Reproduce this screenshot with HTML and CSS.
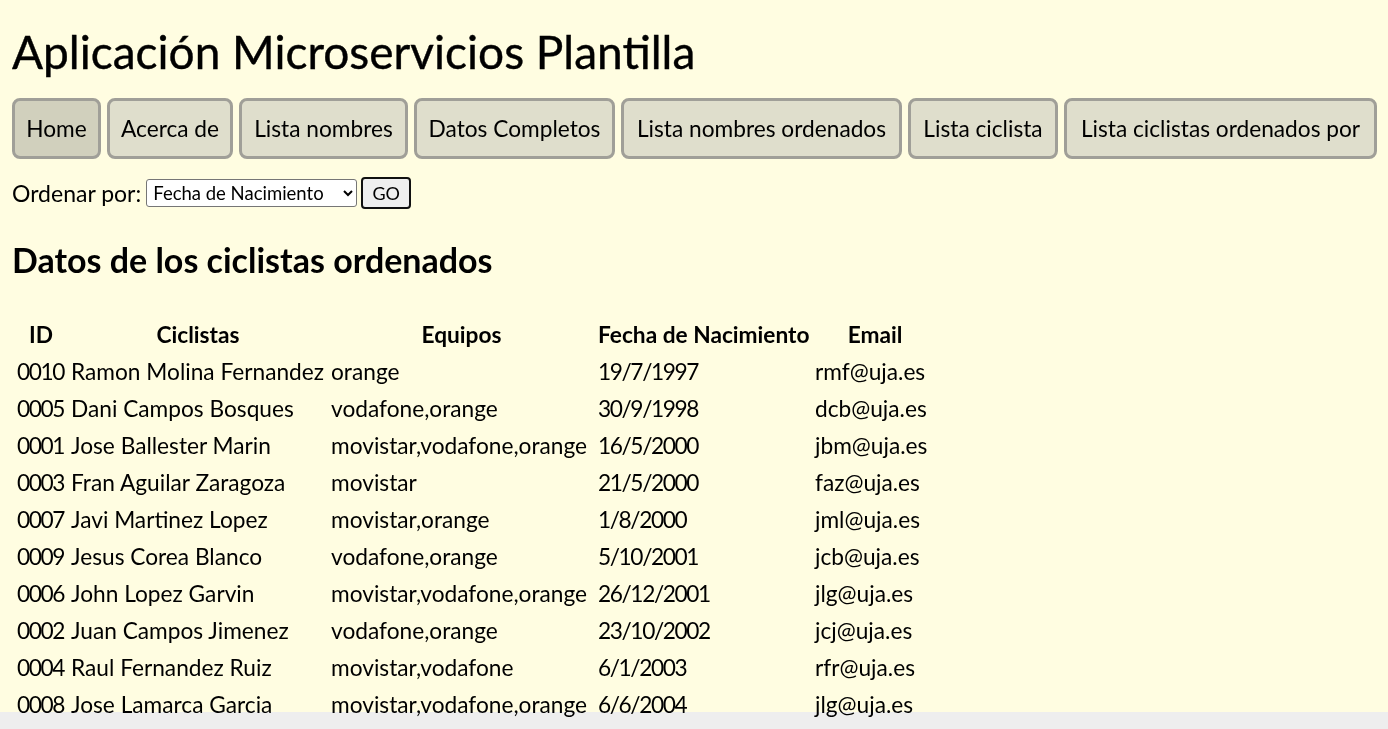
FILE: index.html
```html
<!DOCTYPE html>
<html lang="es">
<head>
<meta charset="utf-8">
<title>Aplicación Microservicios Plantilla</title>
<link rel="stylesheet" href="styles.css">
</head>
<body>
<h1 class="title">Aplicación Microservicios Plantilla</h1>
<nav class="nav">
  <a class="nav-btn nb-home active" href="#">Home</a>
  <a class="nav-btn nb-about" href="#">Acerca de</a>
  <a class="nav-btn nb-names" href="#">Lista nombres</a>
  <a class="nav-btn nb-full" href="#">Datos Completos</a>
  <a class="nav-btn nb-sorted" href="#">Lista nombres ordenados</a>
  <a class="nav-btn nb-riders" href="#">Lista ciclista</a>
  <a class="nav-btn nb-ridersby" href="#">Lista ciclistas ordenados por</a>
</nav>
<form class="order-form">
  <label class="order-label" for="orden">Ordenar por:</label>
  <select class="order-select" id="orden">
    <option>Fecha de Nacimiento</option>
  </select>
  <button class="go-btn" type="button">GO</button>
</form>
<h2 class="subtitle">Datos de los ciclistas ordenados</h2>
<table class="data">
  <colgroup>
    <col class="c-id"><col class="c-name"><col class="c-team"><col class="c-date"><col class="c-mail">
  </colgroup>
  <thead>
    <tr><th>ID</th><th>Ciclistas</th><th>Equipos</th><th>Fecha de Nacimiento</th><th>Email</th></tr>
  </thead>
  <tbody>
    <tr><td class="num">0010</td><td>Ramon Molina Fernandez</td><td>orange</td><td class="num">19/7/1997</td><td>rmf@uja.es</td></tr>
    <tr><td class="num">0005</td><td>Dani Campos Bosques</td><td>vodafone,orange</td><td class="num">30/9/1998</td><td>dcb@uja.es</td></tr>
    <tr><td class="num">0001</td><td>Jose Ballester Marin</td><td>movistar,vodafone,orange</td><td class="num">16/5/2000</td><td>jbm@uja.es</td></tr>
    <tr><td class="num">0003</td><td>Fran Aguilar Zaragoza</td><td>movistar</td><td class="num">21/5/2000</td><td>faz@uja.es</td></tr>
    <tr><td class="num">0007</td><td>Javi Martinez Lopez</td><td>movistar,orange</td><td class="num">1/8/2000</td><td>jml@uja.es</td></tr>
    <tr><td class="num">0009</td><td>Jesus Corea Blanco</td><td>vodafone,orange</td><td class="num">5/10/2001</td><td>jcb@uja.es</td></tr>
    <tr><td class="num">0006</td><td>John Lopez Garvin</td><td>movistar,vodafone,orange</td><td class="num">26/12/2001</td><td>jlg@uja.es</td></tr>
    <tr><td class="num">0002</td><td>Juan Campos Jimenez</td><td>vodafone,orange</td><td class="num">23/10/2002</td><td>jcj@uja.es</td></tr>
    <tr><td class="num">0004</td><td>Raul Fernandez Ruiz</td><td>movistar,vodafone</td><td class="num">6/1/2003</td><td>rfr@uja.es</td></tr>
    <tr><td class="num">0008</td><td>Jose Lamarca Garcia</td><td>movistar,vodafone,orange</td><td class="num">6/6/2004</td><td>jlg@uja.es</td></tr>
  </tbody>
</table>
<div class="bottom-bar"></div>
</body>
</html>
```
FILE: styles.css
```css
html {
  margin: 0;
  padding: 0;
  overflow: hidden;
}
body {
  margin: 0;
  background: #fffde1;
  color: #000;
  font-family: Lato, "Noto Sans", sans-serif;
  font-size: 22.7px;
  padding: 0 12px;
}
.title {
  font-family: Lato, sans-serif;
  font-size: 46px;
  font-weight: 400;
  margin: 0;
  padding-top: 24px;
  line-height: 56px;
  -webkit-text-stroke: 0.4px #000;
}
.nav {
  display: flex;
  flex-wrap: nowrap;
  gap: 6px;
  margin-top: 18px;
}
.nav-btn {
  display: block;
  flex: none;
  box-sizing: border-box;
  height: 61px;
  line-height: 55px;
  padding: 0;
  text-align: center;
  border: 3px solid #a09f98;
  border-radius: 8px;
  background: #dfdecc;
  color: #000;
  text-decoration: none;
  font-size: 22.7px;
  white-space: nowrap;
}
.nav-btn.active {
  background: #d1d0bd;
}
.nb-home { width: 89px; }
.nb-about { width: 126px; }
.nb-names { width: 169px; }
.nb-full { width: 201px; }
.nb-sorted { width: 281px; }
.nb-riders { width: 150px; }
.nb-ridersby { width: 313px; }
.order-form {
  display: flex;
  align-items: center;
  margin-top: 17px;
  height: 34px;
}
.order-label {
  font-size: 23px;
  margin-right: 5px;
}
.order-select {
  width: 211px;
  height: 28px;
  font-family: Lato, sans-serif;
  font-size: 18.5px;
  border: 1px solid #767676;
  border-radius: 3px;
  background: #fff;
  color: #000;
  padding: 0 2px;
}
.go-btn {
  margin-left: 4px;
  width: 50px;
  height: 32px;
  font-family: Lato, sans-serif;
  font-size: 18px;
  border: 2px solid #101010;
  border-radius: 4px;
  background: #efefef;
  color: #000;
  padding: 0;
}
.subtitle {
  font-family: Lato, sans-serif;
  font-size: 34px;
  font-weight: 700;
  margin: 28px 0 0;
  line-height: 44px;
}
.data {
  border-collapse: collapse;
  table-layout: fixed;
  width: 924px;
  margin-top: 34px;
  margin-left: 2px;
}
.c-id { width: 54px; }
.c-name { width: 260px; }
.c-team { width: 267px; }
.c-date { width: 217px; }
.c-mail { width: 126px; }
.data th, .data td {
  height: 37px;
  padding: 0 3px;
  font-size: 22.7px;
  white-space: nowrap;
}
.data th {
  font-weight: 700;
  text-align: center;
}
.data td {
  text-align: left;
}
.data td.num {
  letter-spacing: -1.4px;
}
.bottom-bar {
  position: fixed;
  left: 0;
  right: 0;
  bottom: 0;
  height: 17px;
  background: #eeeeee;
  z-index: -1;
}
```
